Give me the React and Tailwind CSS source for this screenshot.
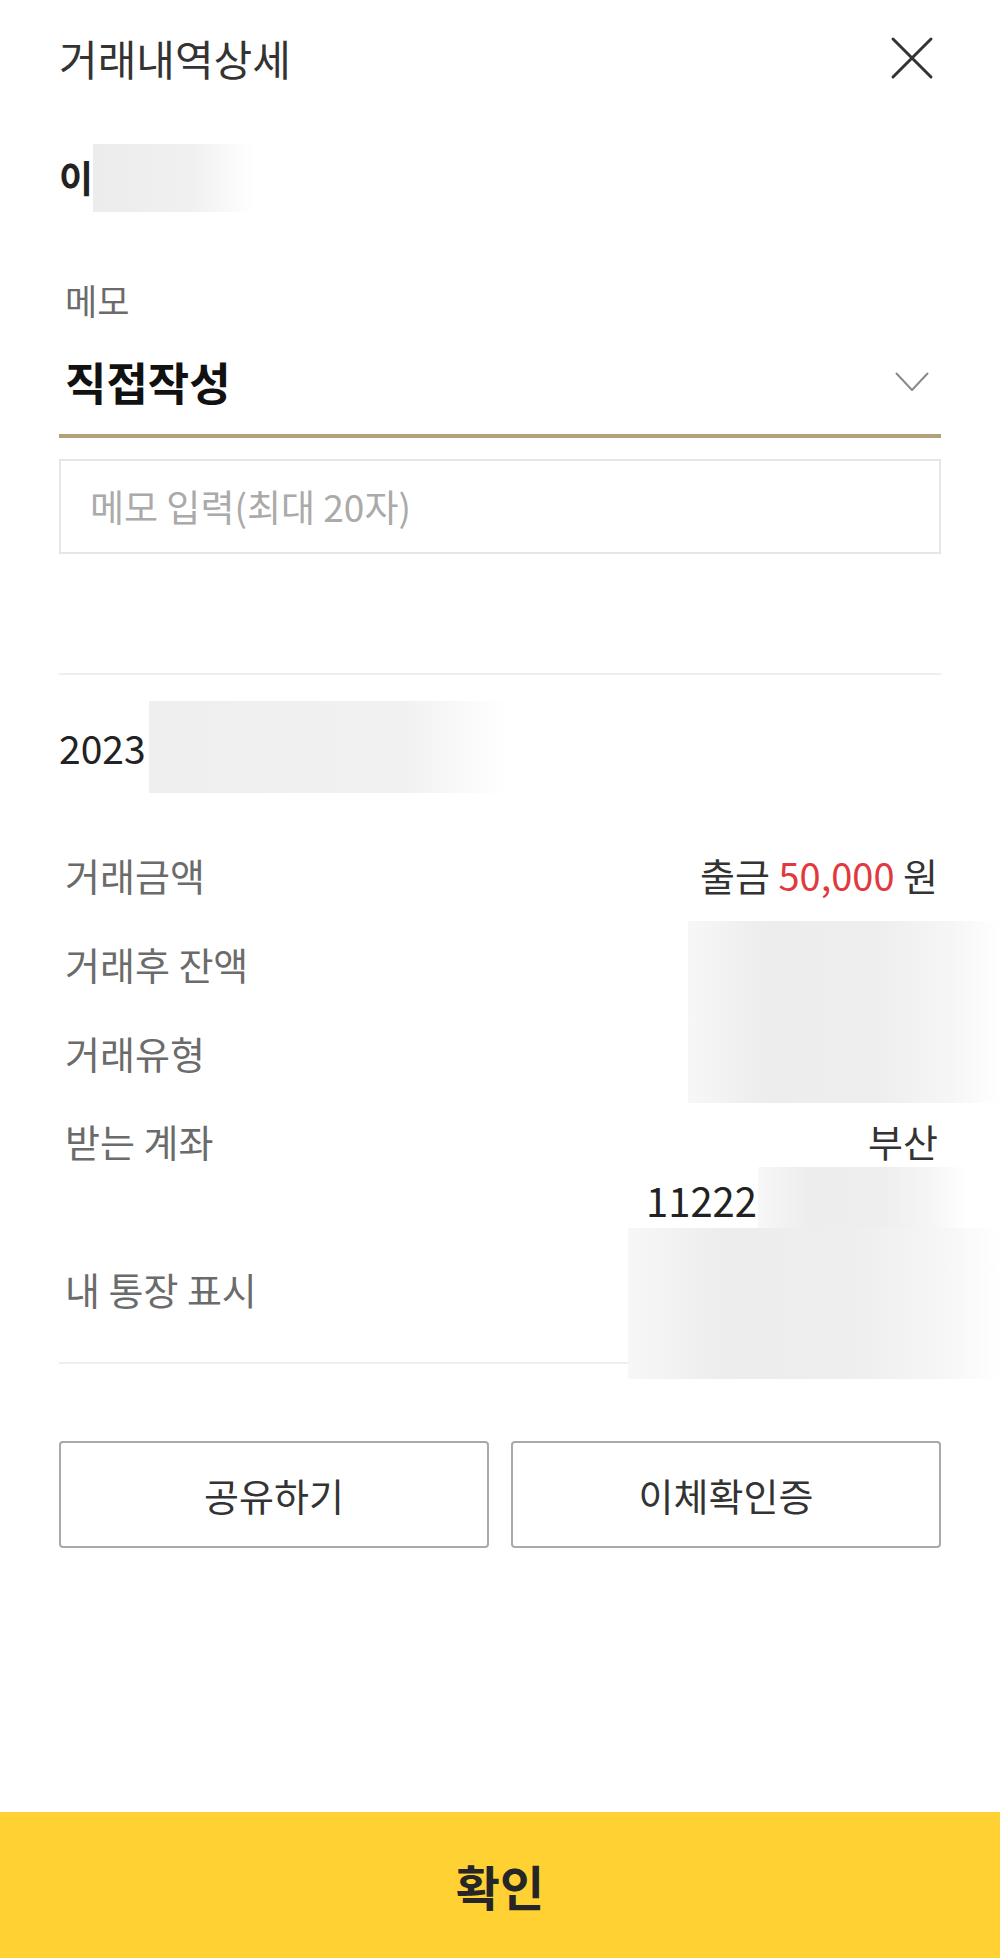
import React from 'react';

function CloseIcon() {
  return (
    <svg width="44" height="44" viewBox="0 0 44 44" fill="none">
      <path d="M3 3 L41 41 M41 3 L3 41" stroke="#333" strokeWidth="3" strokeLinecap="round" />
    </svg>
  );
}

function ChevronDown() {
  return (
    <svg width="34" height="20" viewBox="0 0 34 20" fill="none">
      <path d="M1.5 1.5 L17 18 L32.5 1.5" stroke="#8a8a8a" strokeWidth="2" strokeLinecap="round" strokeLinejoin="round" />
    </svg>
  );
}

// redaction smear, sits over the hidden values
function Smear({ className }) {
  return <div className={'absolute bg-[linear-gradient(to_right,#f7f7f7_0%,#ededed_25%,#eeeeee_60%,#f6f6f6_85%,#ffffff_100%)] ' + className} />;
}

export default function App() {
  const rows = [
    { label: '거래금액', value: (
      <span className="text-[#333]">출금 <span className="text-[#e2393f]">50,000</span> 원</span>
    ) },
    { label: '거래후 잔액', value: null },
    { label: '거래유형', value: null },
  ];

  return (
    <div className="relative w-[1000px] h-[1958px] flex flex-col bg-white font-['Noto_Sans_CJK_KR','Noto_Sans',sans-serif]">
      {/* Header */}
      <header className="h-[116px] flex items-center justify-between pl-[59px] pr-[66px]">
        <h1 className="text-[42px] leading-[50px] text-[#333]">거래내역상세</h1>
        <CloseIcon />
      </header>

      <main className="flex-1 px-[59px]">
        {/* Counterpart name */}
        <div className="mt-[28px] h-[68px] flex items-center">
          <span className="text-[37px] font-bold text-[#222]">이</span>
          <div className="h-[68px] w-[162px] bg-[linear-gradient(to_right,#ececec_0%,#f0f0f0_60%,#ffffff_100%)]" />
        </div>

        {/* Memo */}
        <div className="mt-[66px] pl-[6px] text-[35px] leading-[44px] text-[#6b6b6b]">메모</div>
        <div className="mt-[34px] pl-[6px] pr-[12px] flex items-center justify-between">
          <span className="text-[45px] leading-[52px] font-bold text-[#111]">직접작성</span>
          <ChevronDown />
        </div>
        <div className="mt-[26px] h-[4px] bg-[#b3a17a]" />
        <div className="mt-[21px] h-[95px] border-2 border-[#e6e6e6] flex items-center pl-[29px]">
          <span className="text-[37px] text-[#aaa]">메모 입력(최대 20자)</span>
        </div>

        <div className="mt-[119px] h-[2px] bg-[#eeeeee]" />

        {/* Date */}
        <div className="mt-[26px] h-[92px] flex items-center">
          <span className="text-[39px] text-[#222]">2023</span>
          <div className="ml-[3px] h-[92px] w-[360px] bg-[linear-gradient(to_right,#efefef_0%,#f1f1f1_70%,#ffffff_100%)]" />
        </div>

        {/* Detail rows */}
        <div className="mt-[37px]">
          {rows.map(r => (
            <div key={r.label} className="h-[89px] flex items-center justify-between pl-[6px] pr-[3px]">
              <span className="text-[38px] text-[#6b6b6b]">{r.label}</span>
              <span className="text-[38px]">{r.value}</span>
            </div>
          ))}
          <div className="h-[147px] pt-[20px] flex items-start justify-between pl-[6px] pr-[3px]">
            <span className="text-[38px] leading-[48px] text-[#6b6b6b]">받는 계좌</span>
            <div className="flex flex-col items-end">
              <span className="text-[38px] leading-[48px] text-[#333]">부산</span>
              <span className="mt-[11px] mr-[181px] text-[40px] leading-[48px] text-[#222]">11222</span>
            </div>
          </div>
          <div className="h-[89px] flex items-center pl-[6px]">
            <span className="text-[38px] text-[#6b6b6b]">내 통장 표시</span>
          </div>
        </div>

        <div className="mt-[29px] h-[2px] bg-[#eeeeee]" />

        {/* Actions */}
        <div className="mt-[77px] flex gap-[22px]">
          <button className="flex-1 h-[107px] border-2 border-[#a9a9a9] rounded-[4px] text-[38px] text-[#333]">공유하기</button>
          <button className="flex-1 h-[107px] border-2 border-[#a9a9a9] rounded-[4px] text-[38px] text-[#333]">이체확인증</button>
        </div>
      </main>

      <button className="h-[146px] w-full bg-[#ffd133] text-[48px] font-bold text-[#262626]">확인</button>

      <Smear className="left-[688px] top-[921px] w-[312px] h-[182px]" />
      <Smear className="left-[758px] top-[1167px] w-[207px] h-[62px]" />
      <Smear className="left-[628px] top-[1228px] w-[372px] h-[151px]" />
    </div>
  );
}
